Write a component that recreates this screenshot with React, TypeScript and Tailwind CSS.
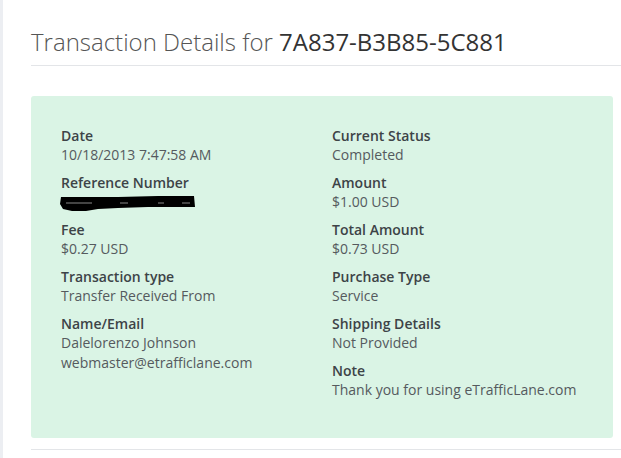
import React from "react";

type Item = { label: string; value: React.ReactNode };

const left: Item[] = [
  { label: "Date", value: "10/18/2013 7:47:58 AM" },
  {
    label: "Reference Number",
    value: (
      <svg width="140" height="20" viewBox="0 0 140 20" className="block -ml-[3px]">
        <path
          d="M3 5 L60 5 L100 4 L136 4 L137 15 L90 15 L60 16 L40 17 L28 19 L14 19 L5 17 L2 12 Z"
          fill="#000"
        />
        <path d="M8 11 L34 11 M62 11 L70 11 M100 11 L106 11 M124 11 L132 11" stroke="#888" strokeWidth="1" />
      </svg>
    ),
  },
  { label: "Fee", value: "$0.27 USD" },
  { label: "Transaction type", value: "Transfer Received From" },
  {
    label: "Name/Email",
    value: (
      <>
        <div>Dalelorenzo Johnson</div>
        <div>webmaster@etrafficlane.com</div>
      </>
    ),
  },
];

const right: Item[] = [
  { label: "Current Status", value: "Completed" },
  { label: "Amount", value: "$1.00 USD" },
  { label: "Total Amount", value: "$0.73 USD" },
  { label: "Purchase Type", value: "Service" },
  { label: "Shipping Details", value: "Not Provided" },
  { label: "Note", value: "Thank you for using eTrafficLane.com" },
];

function Field({ label, value }: Item) {
  return (
    <div className="mb-[8px]">
      <div className="text-[14px] leading-[19px] font-semibold text-[#3d4347]">{label}</div>
      <div className="text-[14px] leading-[20px] text-[#555a5e]">{value}</div>
    </div>
  );
}

export default function App() {
  return (
    <div className="flex min-h-[458px] bg-white font-['Open_Sans',sans-serif]">
      <div className="w-[3px] shrink-0 bg-[#eceef2]" />
      <div className="flex-1 pl-[28px]">
        <h1 className="pt-[25px] text-[24px] leading-[33px] font-light text-[#555]">
          Transaction Details for <span className="font-normal text-[#333]">7A837-B3B85-5C881</span>
        </h1>
        <hr className="mt-[7px] border-t border-[#e3e5e8]" />
        <div className="mt-[30px] mr-[8px] rounded-[3px] bg-[#daf4e5] px-[30px] pt-[30px] pb-[30px] grid grid-cols-[271px_1fr]">
          <div>
            {left.map((f) => (
              <Field key={f.label} {...f} />
            ))}
          </div>
          <div>
            {right.map((f) => (
              <Field key={f.label} {...f} />
            ))}
          </div>
        </div>
        <hr className="mt-[11px] border-t border-[#e3e5e8]" />
      </div>
    </div>
  );
}
